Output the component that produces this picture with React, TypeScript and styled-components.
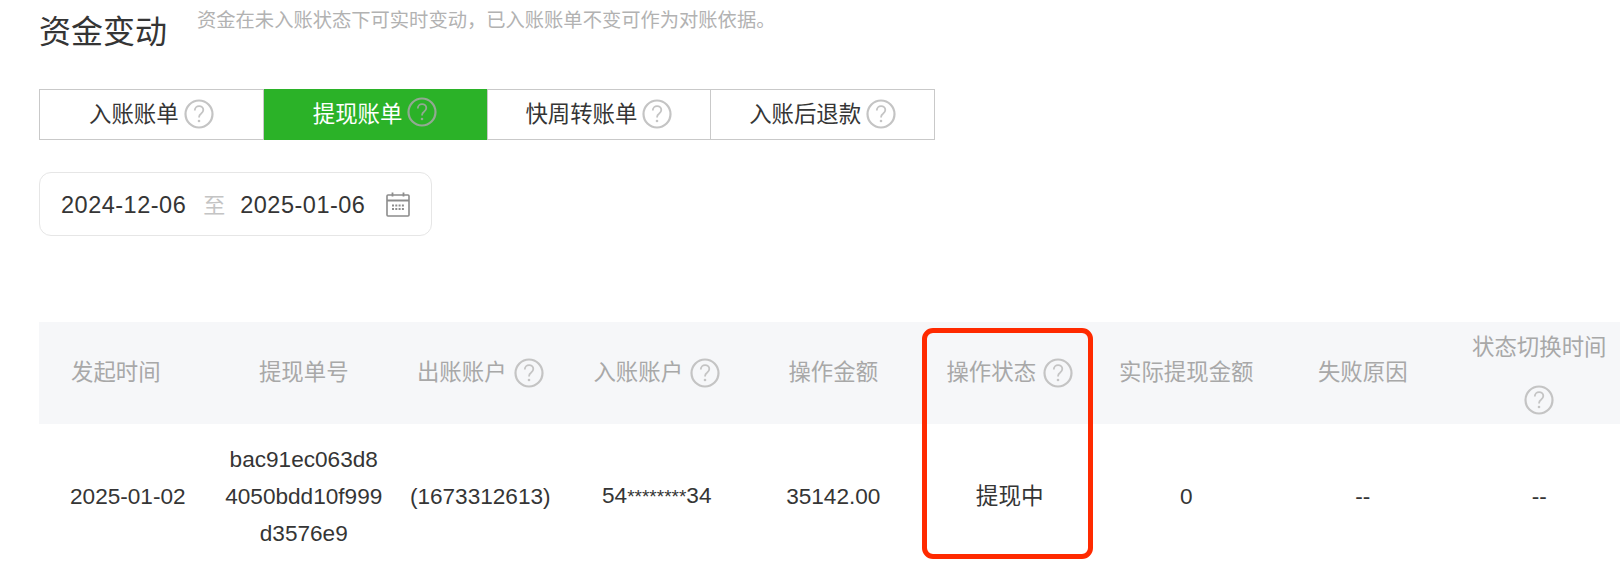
import React from "react";
import styled, { createGlobalStyle } from "styled-components";

// --- Data ---
const tabs = [
  { label: "入账账单", active: false },
  { label: "提现账单", active: true },
  { label: "快周转账单", active: false },
  { label: "入账后退款", active: false },
];

const columns = [
  { title: "发起时间", help: false, value: "2025-01-02" },
  { title: "提现单号", help: false, value: "bac91ec063d8\n4050bdd10f999\nd3576e9" },
  { title: "出账账户", help: true, value: "(1673312613)" },
  { title: "入账账户", help: true, value: "54", mask: "********", tail: "34" },
  { title: "操作金额", help: false, value: "35142.00" },
  { title: "操作状态", help: true, value: "提现中" },
  { title: "实际提现金额", help: false, value: "0" },
  { title: "失败原因", help: false, value: "--" },
  { title: "状态切换时间", help: true, value: "--" },
];

// --- Styled Components ---
const GlobalStyle = createGlobalStyle`
  html, body {
    margin: 0;
    padding: 0;
    width: 1620px;
    height: 570px;
    overflow: hidden;
    background: #fff;
    font-family: "Liberation Sans", "Noto Sans CJK SC", sans-serif;
    color: #353535;
  }
`;

const Page = styled.div`
  position: relative;
  width: 1620px;
  height: 570px;
  padding-left: 39px;
  box-sizing: border-box;
  overflow: hidden;
`;

const TitleRow = styled.div`
  display: flex;
  align-items: flex-start;
  height: 89px;
`;

const Title = styled.h2`
  margin: 13px 0 0;
  font-size: 32px;
  line-height: 38px;
  font-weight: 400;
  color: #353535;
`;

const Subtitle = styled.p`
  margin: 8px 0 0 30px;
  font-size: 19.3px;
  line-height: 26px;
  color: #b2b2b2;
`;

const TabBar = styled.div`
  display: flex;
  width: 896px;
  height: 51px;
  box-sizing: border-box;
  border: 1px solid #c9c9c9;
`;

const Tab = styled.div<{ $active: boolean }>`
  flex: 1;
  display: flex;
  align-items: center;
  justify-content: center;
  gap: 5px;
  font-size: 22.4px;
  color: ${(p) => (p.$active ? "#fff" : "#353535")};
  background: ${(p) => (p.$active ? "#2bb228" : "transparent")};
  margin: ${(p) => (p.$active ? "-1px 0" : "0")};
  & + & {
    border-left: 1px solid #c9c9c9;
  }
`;

const TabLabel = styled.span`
  margin-bottom: 5px;
`;

const TabHelp = styled.span<{ $active: boolean }>`
  display: flex;
  margin-bottom: ${(p) => (p.$active ? "5px" : "2px")};
`;

const DateBox = styled.div`
  display: flex;
  align-items: center;
  width: 393px;
  height: 64px;
  margin-top: 32px;
  padding: 2px 0 0 21px;
  box-sizing: border-box;
  border: 1px solid #e6e6e6;
  border-radius: 12px;
  font-size: 23.5px;
  letter-spacing: 0.5px;
`;

const DateSep = styled.span`
  margin: 0 15px 5px 17px;
  font-size: 22px;
  letter-spacing: 0;
  color: #c4c4c4;
`;

const CalendarIcon = styled.svg`
  margin: 0 0 2px 21px;
  color: #8c8c8c;
`;

const Table = styled.div`
  display: grid;
  grid-template-columns: 176.5px repeat(8, 176.5px);
  width: 1589px;
  margin-top: 86px;
`;

const HeadCell = styled.div<{ $first: boolean }>`
  display: flex;
  flex-wrap: wrap;
  align-items: center;
  align-content: center;
  justify-content: ${(p) => (p.$first ? "flex-start" : "center")};
  column-gap: 7px;
  height: 102px;
  padding: 0 ${(p) => (p.$first ? "0 0 32px" : "0")};
  box-sizing: border-box;
  background: #f6f7f9;
  font-size: 22.4px;
  line-height: 34px;
  color: #a8a8a8;
`;

const HeadText = styled.span<{ $wrapped: boolean }>`
  ${(p) => p.$wrapped && "flex: 0 0 100%; text-align: center; margin-bottom: 20px;"}
`;

const BodyCell = styled.div<{ $first: boolean }>`
  display: flex;
  align-items: center;
  justify-content: ${(p) => (p.$first ? "flex-start" : "center")};
  height: 136px;
  padding: 8px 0 0 ${(p) => (p.$first ? "31px" : "0")};
  box-sizing: border-box;
  font-size: 22.6px;
  line-height: 37px;
  text-align: center;
  white-space: pre-line;
  color: #353535;
`;

const Mask = styled.span`
  font-size: 19px;
`;

const Highlight = styled.div`
  position: absolute;
  left: 922px;
  top: 328px;
  width: 171px;
  height: 231px;
  box-sizing: border-box;
  border: 5px solid #ff2a00;
  border-radius: 11px;
`;

// --- Icons ---
const HelpIcon: React.FC<{ dark?: boolean }> = ({ dark }) => {
  const tone = dark ? "#93a993" : "#c4c4c4";
  return (
    <svg width="30" height="30" viewBox="0 0 30 30" fill="none">
      <circle cx="15" cy="15" r="13.5" stroke={tone} strokeWidth="2.2" />
      <path
        d="M10.8 11.5c0-2.6 1.9-4.3 4.3-4.3 2.4 0 4.2 1.6 4.2 3.8 0 1.8-1 2.7-2.3 3.7-1.3.9-1.9 1.7-1.9 3.2v.6"
        stroke={tone}
        strokeWidth="1.8"
      />
      <circle cx="15" cy="22" r="1.3" fill={tone} />
    </svg>
  );
};

const Calendar: React.FC = () => (
  <CalendarIcon width="24" height="25" viewBox="0 0 24 25" fill="none" stroke="currentColor">
    <rect x="1" y="3" width="22" height="21" rx="1" strokeWidth="1.6" />
    <path d="M1 8.5h22" strokeWidth="2" />
    <path d="M6.5 0.5v4M17.5 0.5v4" strokeWidth="1.8" />
    <path d="M6 13.5h12M6 17h12" strokeWidth="2" strokeDasharray="2 1.3" />
  </CalendarIcon>
);

// --- Componente Principal ---
const App: React.FC = () => {
  return (
    <Page>
      <GlobalStyle />
      <TitleRow>
        <Title>资金变动</Title>
        <Subtitle>资金在未入账状态下可实时变动，已入账账单不变可作为对账依据。</Subtitle>
      </TitleRow>

      <TabBar>
        {tabs.map((tab) => (
          <Tab key={tab.label} $active={tab.active}>
            <TabLabel>{tab.label}</TabLabel>
            <TabHelp $active={tab.active}>
              <HelpIcon dark={tab.active} />
            </TabHelp>
          </Tab>
        ))}
      </TabBar>

      <DateBox>
        2024-12-06
        <DateSep>至</DateSep>
        2025-01-06
        <Calendar />
      </DateBox>

      <Table>
        {columns.map((col, i) => (
          <HeadCell key={col.title} $first={i === 0}>
            <HeadText $wrapped={i === 8}>{col.title}</HeadText>
            {col.help && <HelpIcon />}
          </HeadCell>
        ))}
        {columns.map((col, i) => (
          <BodyCell key={col.title} $first={i === 0}>
            <span>
              {col.value}
              {col.mask && <Mask>{col.mask}</Mask>}
              {col.tail}
            </span>
          </BodyCell>
        ))}
      </Table>

      <Highlight />
    </Page>
  );
};

export default App;
